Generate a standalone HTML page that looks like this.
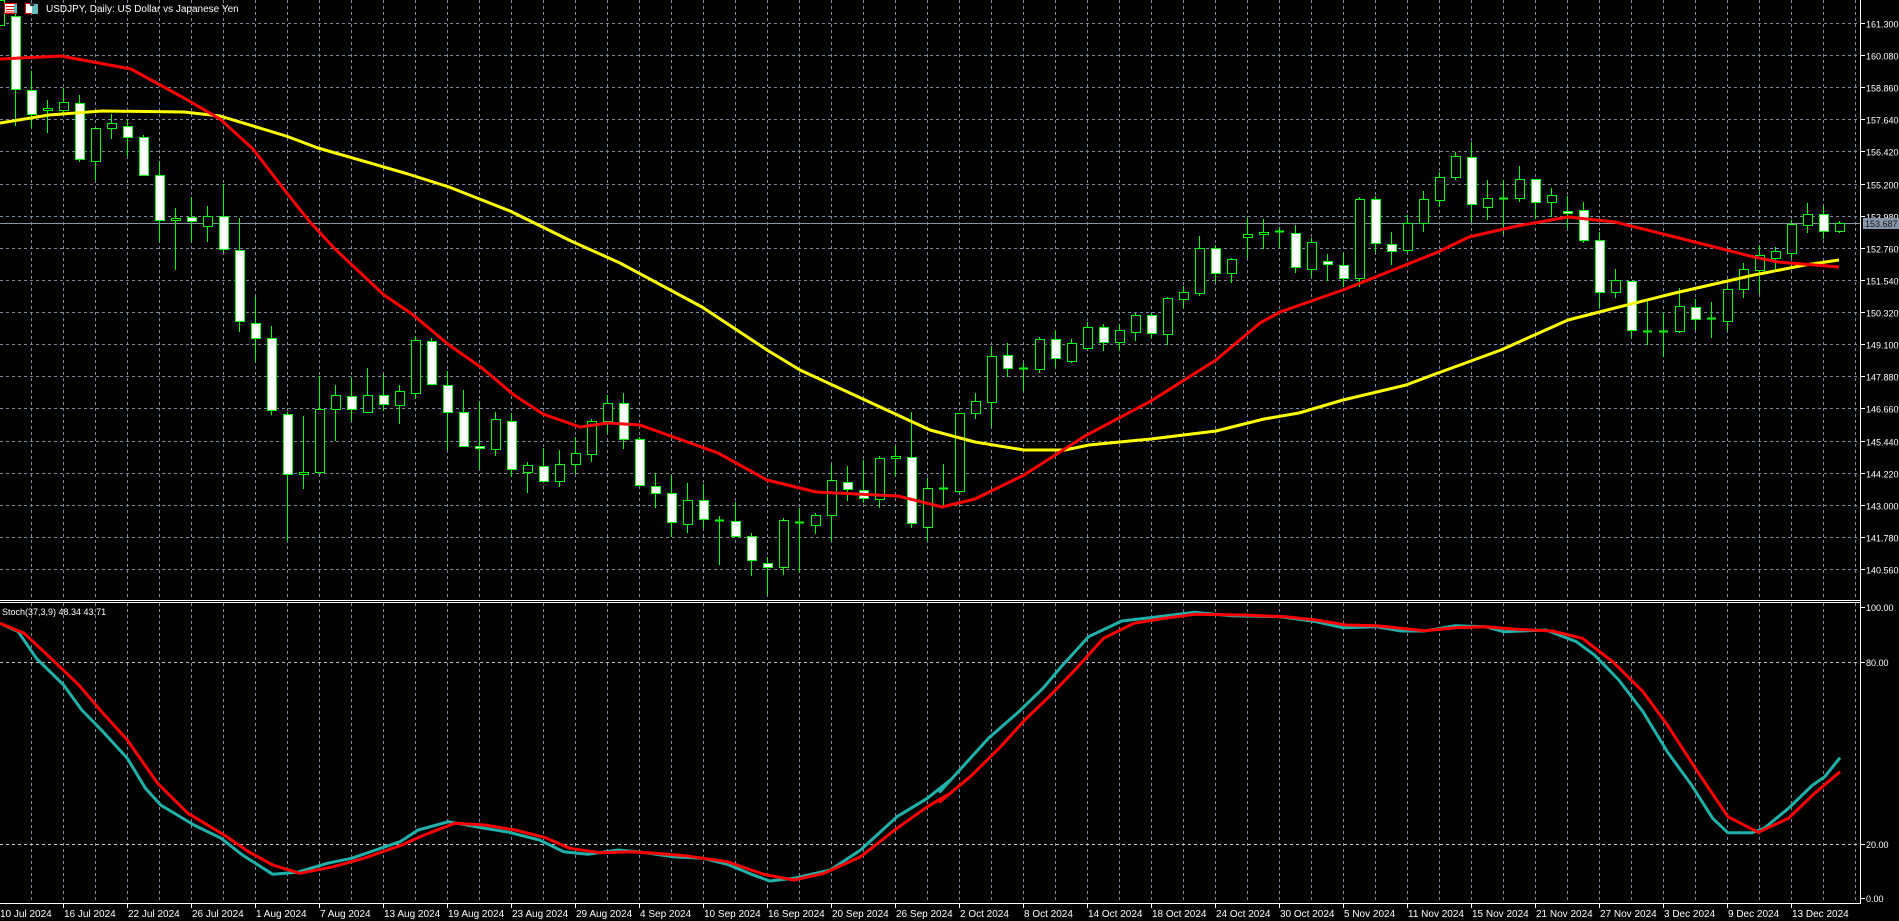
<!DOCTYPE html>
<html><head><meta charset="utf-8">
<style>
html,body{margin:0;padding:0;background:#000;width:1899px;height:921px;overflow:hidden}
svg{display:block}
text{font-family:"Liberation Sans",sans-serif;font-size:10px;fill:#fff}
text.ax{font-size:9px}
</style></head>
<body>
<svg id="s" width="1899" height="921" xmlns="http://www.w3.org/2000/svg"></svg>
<script>
const S=document.getElementById('s');let h='';
const gc='#7d8a9c';
for(let x=31;x<1860;x+=32){h+=`<line x1="${x+.5}" y1="0" x2="${x+.5}" y2="600" stroke="${gc}" stroke-dasharray="3,3"/>`;h+=`<line x1="${x+.5}" y1="603" x2="${x+.5}" y2="903" stroke="${gc}" stroke-dasharray="3,3"/>`;}
const prices=["161.300","160.080","158.860","157.640","156.420","155.200","153.980","152.760","151.540","150.320","149.100","147.880","146.660","145.440","144.220","143.000","141.780","140.560"];
prices.forEach((p,k)=>{const y=Math.round(23+k*32.12)+.5;h+=`<line x1="0" y1="${y}" x2="1860" y2="${y}" stroke="${gc}" stroke-dasharray="3,3"/><line x1="1861" y1="${y}" x2="1865" y2="${y}" stroke="#fff"/><text class="ax" x="1866" y="${y+4}">${p}</text>`;});
[[662,'80.00'],[844,'20.00']].forEach(a=>{h+=`<line x1="0" y1="${a[0]+.5}" x2="1860" y2="${a[0]+.5}" stroke="#c8c8c8" stroke-dasharray="3,3"/>`;});
[[607,'100.00'],[662,'80.00'],[844,'20.00'],[898,'0.00']].forEach(a=>{h+=`<line x1="1861" y1="${a[0]+.5}" x2="1865" y2="${a[0]+.5}" stroke="#fff"/><text class="ax" x="1866" y="${a[0]+4}">${a[1]}</text>`;});
h+=`<line x1="0" y1="223.5" x2="1860" y2="223.5" stroke="#8a96a6"/>`;
const z4=[[43,233,35,328,'w'],[234,297,185,335,'w'],[283,287,260,348,'g'],[265,287,230,297,'g'],[268,414,247,422,'w'],[333,419,333,471,'g'],[322,333,298,362,'g'],[330,358,312,408,'w'],[358,456,352,460,'w'],[458,573,420,628,'w'],[568,573,542,705,'g'],[567,578,513,628,'w'],[563,590,538,632,'g'],[563,651,479,657,'w'],[652,839,570,866,'w'],[842,881,776,941,'w'],[882,1071,852,1084,'w'],[1080,1237,1075,1413,'w'],[1233,1237,1085,1277,'g'],[1067,1233,981,1233,'g'],[1031,1067,1006,1150,'g'],[1033,1067,985,1098,'w'],[1031,1075,960,1075,'g'],[1031,1054,977,1073,'w'],[1021,1056,1004,1106,'g'],[887,1025,877,1041,'g'],[890,1002,882,1004,'w'],[1005,1075,968,1175,'w'],[1075,1165,1019,1167,'w'],[1163,1168,1047,1224,'w'],[1094,1171,1075,1190,'g'],[1099,1224,1077,1245,'w'],[1214,1233,1206,1287,'g'],[1216,1255,1168,1255,'w'],[1210,1255,1175,1271,'g'],[1182,1210,1140,1238,'g'],[1098,1184,1094,1206,'g'],[1051,1100,1030,1130,'g'],[1051,1147,1026,1171,'w']];
const z5=[[868,1005,862,1010,'w'],[1007,1030,968,1075,'w'],[1030,1117,978,1160,'w'],[1051,1123,1000,1148,'g'],[1051,1108,1003,1135,'w'],[1110,1114,1098,1245,'g'],[1114,1157,1057,1160,'w'],[1157,1231,1150,1277,'w'],[1238,1251,1222,1334,'w'],[1110,1251,1103,1275,'g'],[1115,1120,1075,1265,'w'],[1094,1126,1090,1152,'g'],[991,1094,945,1172,'g'],[995,1018,948,1052,'w'],[1020,1045,930,1060,'w'],[925,1046,918,1073,'g'],[918,925,888,978,'g'],[920,1120,787,1135,'w'],[1015,1130,985,1172,'g'],[1015,1018,942,1065,'g'],[790,1022,790,1030,'g'],[754,790,730,807,'g'],[619,755,588,832,'g'],[616,655,580,682,'w'],[654,656,640,722,'g'],[568,658,560,668,'g'],[568,625,540,650,'w'],[580,632,568,638,'g'],[532,593,515,600,'g'],[532,575,522,603,'w'],[541,575,522,603,'g'],[496,545,490,572,'g'],[496,550,490,563,'w'],[445,553,440,585,'g'],[427,448,408,475,'g'],[295,430,258,438,'g'],[295,368,285,395,'w'],[328,368,323,398,'g']];
const z6=[[343,352,295,415,'g'],[336,343,297,386,'g'],[334,337,320,383,'g'],[340,442,315,458,'w'],[367,448,355,470,'g'],[424,432,402,482,'w'],[436,475,400,500,'w'],[238,475,232,500,'g'],[238,370,228,395,'w'],[373,393,336,434,'w'],[310,391,285,398,'g'],[238,310,213,335,'g'],[172,241,157,262,'g'],[109,172,97,180,'g'],[112,253,67,305,'w'],[235,262,180,300,'g'],[234,237,180,342,'g'],[178,235,138,245,'g'],[178,247,178,298,'w'],[226,247,204,290,'g'],[273,280,228,325,'w'],[271,361,245,368,'w'],[361,517,336,563,'w'],[481,517,447,533,'g'],[484,631,484,650,'w'],[632,635,540,675,'g'],[632,635,580,710,'g'],[559,634,505,640,'g'],[562,598,538,630,'w'],[595,598,545,653,'g'],[508,604,495,633,'g'],[448,508,430,533,'g'],[405,451,375,523,'g'],[394,415,380,455,'g'],[313,400,300,415,'g'],[281,316,250,340,'g'],[281,334,258,357,'w'],[310,334,303,340,'g']];
const bars=[];
z4.forEach(b=>bars.push(b.slice(0,4).map(v=>v/2.61).concat(b[4])));
z5.forEach(b=>bars.push(b.slice(0,4).map(v=>150+v/3).concat(b[4])));
z6.forEach(b=>bars.push(b.slice(0,4).map(v=>120+v/3).concat(b[4])));
function candle(x,t,b,hi,lo,ty){t=Math.round(t);b=Math.round(b);hi=Math.round(hi);lo=Math.round(lo);
 let s=`<line x1="${x+.5}" y1="${hi}" x2="${x+.5}" y2="${lo}" stroke="#00ff00"/>`;
 if(b-t<2){s+=`<line x1="${x-4}" y1="${t+.5}" x2="${x+5}" y2="${t+.5}" stroke="#00ff00" stroke-width="${b-t<1?1:2}"/>`;}
 else s+=`<rect x="${x-4+.5}" y="${t+.5}" width="9" height="${b-t}" fill="${ty=='w'?'#fff':'#000'}" stroke="#00ff00"/>`;
 return s;}
h+=candle(-1,0,25,0,30,'g');
bars.forEach((b,i)=>{h+=candle(15+16*i,b[0],b[1],b[2],b[3],b[4]);});
function pl(pts,c,w){return `<polyline points="${pts.map(p=>p.join(',')).join(' ')}" fill="none" stroke="${c}" stroke-width="${w}" stroke-linejoin="round"/>`;}
const red=[[0,59],[61,56],[131,69],[184,98],[220,119],[253,149],[286,192],[310,222],[335,249],[384,295],[412,314],[449,345],[482,368],[514,395],[543,414],[580,427],[608,423],[640,425],[718,453],[767,480],[816,492],[898,496],[942,507],[975,499],[1024,475],[1085,436],[1151,401],[1216,360],[1260,323],[1280,312],[1343,290],[1398,268],[1438,252],[1469,237],[1517,226],[1568,217],[1615,222],[1675,237],[1754,257],[1778,262],[1839,267]];
const yel=[[0,123],[49,115],[102,111],[184,112],[220,116],[286,136],[318,148],[408,174],[449,187],[510,211],[571,241],[620,263],[702,307],[767,350],[800,370],[865,400],[930,430],[975,442],[1024,450],[1065,450],[1089,445],[1151,439],[1216,431],[1264,419],[1299,413],[1343,400],[1406,385],[1438,373],[1501,350],[1568,320],[1615,308],[1675,293],[1754,275],[1805,265],[1839,260]];
h+=pl(yel,'#ffff00',3)+pl(red,'#ff0000',3);
const t7=[[0,85],[30,110],[60,190],[105,270],[135,345],[170,410],[210,490],[240,580],[265,630],[320,690],[365,730],[400,780],[450,838],[490,832],[540,805],[580,790],[620,765],[660,740],[690,705],[740,680],[790,697],[840,712],[890,735],[930,770],[970,778],[1020,765],[1060,772],[1110,785],[1160,790],[1200,808],[1240,838],[1270,858],[1310,850],[1370,825],[1420,765],[1480,665],[1530,610],[1568,555]];
const r7=[[0,85],[40,115],[90,200],[130,270],[170,355],[210,435],[260,565],[310,655],[370,720],[410,770],[450,810],[495,835],[550,815],[600,790],[660,752],[700,720],[750,685],[800,690],[850,705],[900,728],[940,760],[990,773],[1040,770],[1080,775],[1130,782],[1200,800],[1260,838],[1310,855],[1360,835],[1420,785],[1480,700],[1530,635],[1568,595]];
const t8=[[0,590],[40,510],[80,430],[130,350],[170,280],[200,215],[245,125],[300,78],[360,65],[420,52],[480,62],[560,65],[620,80],[665,98],[720,95],[760,108],[800,108],[850,92],[900,95],[930,110],[1000,105],[1050,140],[1080,180],[1120,255],[1160,350],[1200,470],[1240,570],[1275,670],[1300,713],[1340,713],[1360,700],[1400,640],[1440,570],[1460,545],[1485,488]];
const r8=[[0,620],[50,545],[100,455],[140,375],[180,305],[220,230],[270,130],[320,85],[370,70],[420,58],[500,60],[570,65],[620,75],[670,90],[720,92],[800,107],[850,98],[900,95],[950,103],[1010,108],[1060,130],[1110,200],[1160,290],[1200,390],[1250,530],[1300,665],[1350,712],[1400,670],[1440,600],[1485,530]];
const tr7=a=>a.map(p=>[(p[0]/1.65).toFixed(1),(595+p[1]/3).toFixed(1)]);
const tr8=a=>a.map(p=>[(940+p[0]/1.65).toFixed(1),(595+p[1]/3).toFixed(1)]);
h+=pl(tr7(t7).concat(tr8(t8)),'#20b2aa',3)+pl(tr7(r7).concat(tr8(r8)),'#ff0000',3);
h+=`<rect x="0" y="600" width="1861" height="3" fill="#000"/><line x1="0" y1="600.5" x2="1861" y2="600.5" stroke="#fff"/><line x1="0" y1="602.5" x2="1861" y2="602.5" stroke="#fff"/>`;
h+=`<line x1="1860.5" y1="0" x2="1860.5" y2="904" stroke="#fff"/><line x1="0" y1="903.5" x2="1861" y2="903.5" stroke="#fff"/>`;
h+=`<rect x="1863" y="218" width="36" height="11" fill="#8596a8"/><text class="ax" x="1865" y="227" style="fill:#1a1a1a">153.687</text>`;
const d=["10 Jul 2024","16 Jul 2024","22 Jul 2024","26 Jul 2024","1 Aug 2024","7 Aug 2024","13 Aug 2024","19 Aug 2024","23 Aug 2024","29 Aug 2024","4 Sep 2024","10 Sep 2024","16 Sep 2024","20 Sep 2024","26 Sep 2024","2 Oct 2024","8 Oct 2024","14 Oct 2024","18 Oct 2024","24 Oct 2024","30 Oct 2024","5 Nov 2024","11 Nov 2024","15 Nov 2024","21 Nov 2024","27 Nov 2024","3 Dec 2024","9 Dec 2024","13 Dec 2024"];
d.forEach((s,j)=>{const x=-1+64*j;if(j>0)h+=`<line x1="${x+.5}" y1="904" x2="${x+.5}" y2="908" stroke="#fff"/>`;h+=`<text x="${x+1}" y="917">${s}</text>`;});
h+=`<rect x="4.5" y="3.5" width="12" height="10" fill="#fff" stroke="#e00"/><line x1="6" y1="6.5" x2="15" y2="6.5" stroke="#e00"/><line x1="6" y1="9.5" x2="15" y2="9.5" stroke="#e00"/><line x1="6" y1="12" x2="15" y2="12" stroke="#e00"/><rect x="14" y="4" width="3" height="9" fill="#5bb"/>`;
h+=`<rect x="25.5" y="3.5" width="8" height="10" fill="#fff" stroke="#e00"/><rect x="32" y="4" width="6" height="10" fill="#6bb"/><rect x="30" y="3" width="4" height="3" fill="#333"/>`;
h+=`<text x="46" y="12">USDJPY, Daily:  US Dollar vs Japanese Yen</text>`;
h+=`<text x="2" y="615" style="font-size:9px">Stoch(37,3,9) 48.34 43.71</text>`;
S.innerHTML=h;
</script>
</body></html>
